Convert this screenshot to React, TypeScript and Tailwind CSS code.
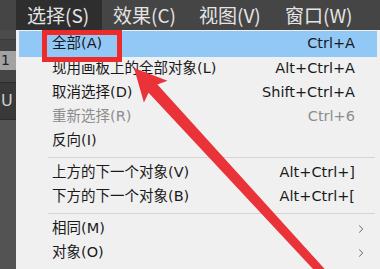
import React from "react";

const latin = { fontFamily: '"DejaVu Sans", "Noto Sans CJK SC", sans-serif' };
const cjk = { fontFamily: '"Noto Sans CJK SC", "DejaVu Sans", sans-serif' };

type Item = { label: string; sc?: string; disabled?: boolean; sub?: boolean; sep?: boolean };

const items: Item[] = [
  { label: "现用画板上的全部对象(L)", sc: "Alt+Ctrl+A" },
  { label: "取消选择(D)", sc: "Shift+Ctrl+A" },
  { label: "重新选择(R)", sc: "Ctrl+6", disabled: true },
  { label: "反向(I)" },
  { label: "", sep: true },
  { label: "上方的下一个对象(V)", sc: "Alt+Ctrl+]" },
  { label: "下方的下一个对象(B)", sc: "Alt+Ctrl+[" },
  { label: "", sep: true },
  { label: "相同(M)", sub: true },
  { label: "对象(O)", sub: true },
  { label: "", sep: true },
];

function Chevron() {
  return (
    <svg width="6" height="10" viewBox="0 0 6 10" className="block">
      <path d="M1.2 1.5 L4.8 5 L1.2 8.5" fill="none" stroke="#666" strokeWidth="1" />
    </svg>
  );
}

export default function App() {
  const tabs = ["选择(S)", "效果(C)", "视图(V)", "窗口(W)"];
  return (
    <div className="relative w-[380px] h-[269px] overflow-hidden bg-[#535353]">
      <div className="flex h-[30px] bg-[#454545] pl-[16px]">
        {tabs.map((t, i) => (
          <div
            key={t}
            className={`w-[86px] h-[30px] pl-[11px] flex items-center text-[19px] text-[#e4e4e4] ${i === 0 ? "bg-[#2e2e2e]" : ""}`}
            style={cjk}
          >
            {t}
          </div>
        ))}
      </div>
      <div className="flex h-[239px]">
        <div className="w-[16px] flex flex-col">
          <div className="h-[10px] bg-[#4b4b4b] border-b border-[#3a3a3a]" />
          <div className="h-[11px] bg-[#434343]" />
          <div className="h-[19px] bg-[#a2a2a2] text-[14px] leading-[19px] text-[#222] pl-[1px]" style={latin}>
            1
          </div>
          <div className="h-[12px] bg-[#454545]" />
          <div className="h-[38px] bg-[#393939] border-y border-[#2c2c2c] flex items-center text-[16px] text-[#cfcfcf] pl-[1px]" style={latin}>
            U
          </div>
          <div className="flex-1 bg-[#535353]" />
        </div>
        <div className="flex-1 bg-[#f0f0f0] pt-[1px] px-[3px] text-[14.5px] text-[#1a1a1a]" style={latin}>
          <div className="h-[26px] bg-[#92c8f6] flex items-center justify-between pl-[33px] pr-[22px]">
            <span>全部(A)</span>
            <span>Ctrl+A</span>
          </div>
          {items.map((it, i) =>
            it.sep ? (
              <div key={i} className="h-[8px] flex items-center pl-[29px] pr-[2px]">
                <div className="h-px w-full bg-[#d5d5d5]" />
              </div>
            ) : (
              <div
                key={i}
                className={`h-[24px] flex items-center justify-between pl-[33px] ${it.sub ? "pr-[13px]" : "pr-[22px]"} ${it.disabled ? "text-[#8d8d8d]" : ""}`}
              >
                <span>{it.label}</span>
                {it.sc ? <span>{it.sc}</span> : it.sub ? <Chevron /> : null}
              </div>
            )
          )}
        </div>
      </div>
      <div className="absolute left-[42px] top-[30px] w-[80px] h-[32px] border-[5px] border-[#ee2b2b]" />
      <svg className="absolute left-0 top-0" width="380" height="269" viewBox="0 0 380 269">
        <polygon
          points="134,68 167.5,80.8 157.4,84.5 353.5,300.8 347.7,306.2 148.6,92.7 143.9,102.4"
          fill="#ea3338"
        />
      </svg>
    </div>
  );
}
